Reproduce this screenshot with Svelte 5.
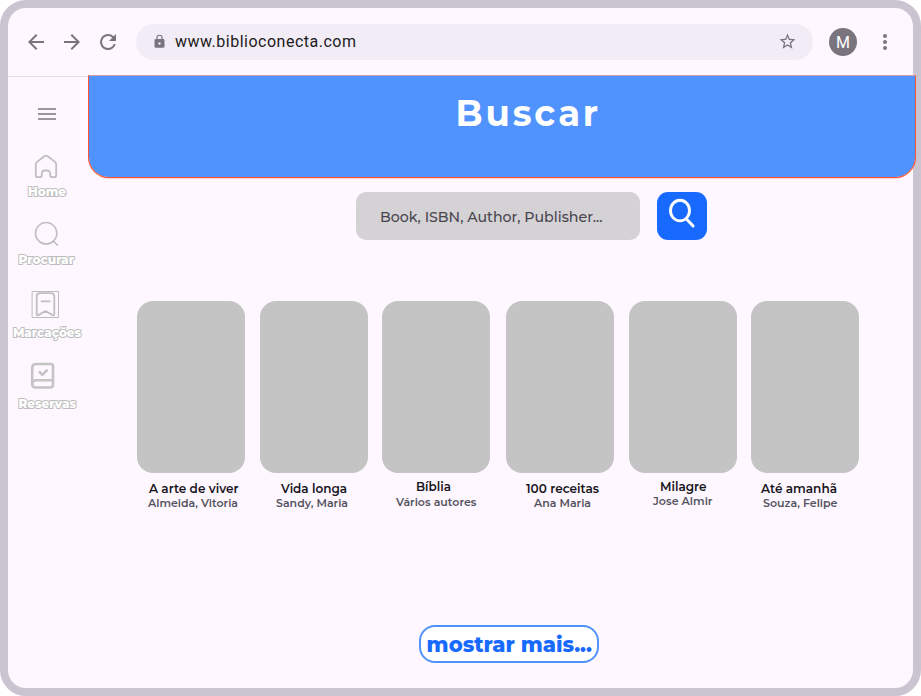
<script>
  const books = [
    { title: 'A arte de viver', author: 'Almeida, Vitoria', t: [12, 89.5, 20], a: [11, 90, 34] },
    { title: 'Vida longa', author: 'Sandy, Maria', t: [21, 66, 20], a: [16, 72, 34] },
    { title: 'Bíblia', author: 'Vários autores', t: [34, 35, 18], a: [14, 80.5, 33] },
    { title: '100 receitas', author: 'Ana Maria', t: [20, 73, 20], a: [28, 57, 34] },
    { title: 'Milagre', author: 'Jose Almir', t: [31, 46.5, 18], a: [24, 59.5, 32] },
    { title: 'Até amanhã', author: 'Souza, Felipe', t: [10, 76, 20], a: [12, 74.5, 34] }
  ];
  const links = [
    { name: 'home', label: 'Home', x: 20, w: 38 },
    { name: 'search', label: 'Procurar', x: 10.5, w: 55.5 },
    { name: 'mark', label: 'Marcações', x: 5, w: 68 },
    { name: 'book', label: 'Reservas', x: 10.5, w: 57.5 }
  ];
</script>

{#snippet fitted(text, x, y, w, cls)}
  <text {x} {y} class={cls} textLength={w} lengthAdjust="spacingAndGlyphs">{text}</text>
{/snippet}

<div class="window">
  <header class="toolbar">
    <svg class="nav-icon" viewBox="0 0 24 24"><path d="M20 11H7.83l5.59-5.59L12 4l-8 8 8 8 1.41-1.41L7.83 13H20z" /></svg>
    <svg class="nav-icon" viewBox="0 0 24 24"><path d="M12 4l-1.41 1.41L16.17 11H4v2h12.17l-5.58 5.59L12 20l8-8z" /></svg>
    <svg class="nav-icon" viewBox="0 0 24 24"><path d="M17.65 6.35A7.96 7.96 0 0 0 12 4a8 8 0 1 0 7.73 10h-2.08A6 6 0 1 1 12 6c1.66 0 3.14.69 4.22 1.78L13 11h7V4z" /></svg>
    <div class="address">
      <svg class="lock" viewBox="0 0 24 24"><path d="M18 8h-1V6A5 5 0 0 0 7 6v2H6a2 2 0 0 0-2 2v10a2 2 0 0 0 2 2h12a2 2 0 0 0 2-2V10a2 2 0 0 0-2-2zm-6 9a2 2 0 1 1 0-4 2 2 0 0 1 0 4zM8.9 8V6a3.1 3.1 0 0 1 6.2 0v2z" /></svg>
      <span class="url">www.biblioconecta.com</span>
      <svg class="star" viewBox="0 0 24 24"><path d="M22 9.24l-7.19-.62L12 2 9.19 8.63 2 9.24l5.46 4.73L5.82 21 12 17.27 18.18 21l-1.63-7.03zM12 15.4l-3.76 2.27 1-4.28-3.32-2.88 4.38-.38L12 6.1l1.71 4.04 4.38.38-3.32 2.88 1 4.28z" /></svg>
    </div>
    <div class="avatar">M</div>
    <svg class="dots" viewBox="0 0 24 24"><circle cx="12" cy="6" r="2" /><circle cx="12" cy="12" r="2" /><circle cx="12" cy="18" r="2" /></svg>
  </header>

  <div class="body">
    <nav class="sidebar">
      <svg class="burger" width="18" height="12"><path d="M0 1h18M0 6h18M0 11h18" stroke="#9c979c" stroke-width="2" /></svg>
      {#each links as link}
        <a class="link {link.name}" href="#{link.name}">
          <svg class="glyph" width="80" height="30" fill="none" stroke="#bfbfbf" stroke-width="1.8" stroke-linecap="round" stroke-linejoin="round">
            {#if link.name === 'home'}
              <path d="M29.8 25.2a2 2 0 0 1-2-2V12.5q0-1.6 1.2-2.6l7.4-5.7q1.6-1.2 3.2 0L47 9.9q1.2 1 1.2 2.600v10.700a2 2 0 0 1-2 2h-2a2 2 0 0 1-2-2v-1.700a3 3 0 0 0-3-3h-2.400a3 3 0 0 0-3 3v1.700a2 2 0 0 1-2 2z" />
            {:else if link.name === 'search'}
              <circle cx="38.2" cy="13.3" r="10.7" stroke-width="1.500" /><path d="M45.300 21l4 4" stroke-width="1.700" />
            {:else if link.name === 'mark'}
              <rect x="24.5" y="1.5" width="26" height="26" stroke="#bcbcbc" stroke-width="1" />
              <path d="M28.700 24V6.500q0-3.400 3.400-3.400h10.800q3.400 0 3.400 3.400V24q0 2-1.700 1.100l-7.100-4.100-7.100 4.100q-1.700.900-1.700-1.100zM33.500 11.300h8.300" />
            {:else}
              <g stroke="#c4c4c4" stroke-width="2.600">
                <path d="M24.200 23V7q0-4 4-4h14.600q2.200 0 2.200 2.200v18.600q0 2.700-2.700 2.700H27.700q-3.500 0-3.500-3.500 0-3.800 3.500-3.800H45M31.800 11.200l2.500 2.700 4.400-4.400" />
              </g>
            {/if}
          </svg>
          <svg class="caption" width="80" height="18">{@render fitted(link.label, link.x, 12, link.w, 'outline')}</svg>
        </a>
      {/each}
    </nav>

    <main>
      <section class="hero">
        <svg width="826" height="101">{@render fitted('Buscar', 366.500, 50, 145.500, 'heading')}</svg>
      </section>

      <div class="search">
        <div class="field"><svg width="284" height="48">{@render fitted('Book, ISBN, Author, Publisher...', 24, 30, 222.5, 'hint')}</svg></div>
        <button class="go" aria-label="Buscar">
          <svg width="50" height="48" fill="none" stroke="#fff" stroke-linecap="round">
            <ellipse cx="23" cy="18.600" rx="9.500" ry="10.300" stroke-width="2.900" /><path d="M29.700 27.200l6.400 6.800" stroke-width="3" />
          </svg>
        </button>
      </div>

      <div class="shelf">
        {#each books as b}
          <article>
            <div class="cover"></div>
            <svg width="108" height="42">
              {@render fitted(b.title, b.t[0], b.t[2], b.t[1], 'title')}
              {@render fitted(b.author, b.a[0], b.a[2], b.a[1], 'author')}
            </svg>
          </article>
        {/each}
      </div>

      <button class="more"><svg width="176" height="34">{@render fitted('mostrar mais...', 5.500, 25, 165.500, 'more-text')}</svg></button>
    </main>
  </div>
</div>

<style>
  :global(body) { background: #fff; }
  * { box-sizing: border-box; }
  svg { display: block; flex: none; overflow: visible; }
  .window {
    width: 921px; height: 696px; border: 8px solid #cac4d0; border-radius: 26px;
    background: #fef7ff; font-family: Montserrat, Inter, sans-serif;
  }
  .toolbar { height: 69px; display: flex; align-items: center; padding: 0 16px 1px; border-bottom: 1px solid #e4dfe6; }
  .nav-icon { width: 24px; height: 24px; margin-right: 12px; fill: #79747e; }
  .address {
    display: flex; align-items: center; width: 677px; height: 36px; margin-left: 4px;
    padding: 0 16px; border-radius: 18px; background: #f2ecf6;
  }
  .lock { width: 15px; height: 15px; fill: #79747e; }
  .url { flex: 1; margin-left: 8px; font: 400 16px/24px Roboto, sans-serif; letter-spacing: .5px; color: #1d1b20; }
  .star { width: 19px; height: 19px; margin-right: .5px; fill: #79747e; }
  .avatar {
    width: 28px; height: 28px; margin-left: 16px; border-radius: 50%; background: #79747e;
    color: #fff; font: 400 16px/29px Roboto, sans-serif; text-align: center;
  }
  .dots { width: 24px; height: 24px; margin-left: 16px; fill: #79747e; }
  .body { display: flex; margin-top: -2px; }
  .sidebar { width: 80px; flex: none; padding-top: 33px; }
  .burger { margin-left: 30px; }
  .link { display: block; text-decoration: none; }
  .home { margin-top: 32px; }
  .search.link { margin-top: 18px; }
  .mark { margin-top: 20px; }
  .book { margin-top: 18px; }
  .home .caption { margin-top: 2px; }
  .search.link .caption { margin-top: 2px; }
  .mark .caption { margin-top: 5px; }
  .book .caption { margin-top: 5px; }
  main { width: 828px; flex: none; display: flex; flex-direction: column; }
  .hero {
    height: 103px; border: 1px solid #fa5535; border-top-color: #d89ba9; border-radius: 0 0 21px 21px;
    background: #5093ff; background-clip: padding-box; box-shadow: 0 .5px 0 rgba(250, 85, 53, .5);
  }
  .search:not(.link) { display: flex; gap: 17px; margin: 14px 0 0 268px; }
  .field { width: 284px; height: 48px; border-radius: 10px; background: #d4d2d5; }
  button { padding: 0; border: 0; display: block; font-family: inherit; }
  .go { width: 50px; height: 48px; border-radius: 11px; background: #186aff; }
  .shelf { display: flex; gap: 14.5px; margin: 61px 0 0 49px; }
  article { width: 108px; flex: none; }
  article:nth-child(4) { margin-left: 1.5px; }
  .cover { height: 172px; border-radius: 16px; background: #c4c4c4; }
  .more { width: 180px; height: 38px; margin: 110px 0 0 331px; border: 2px solid #5093f8; border-radius: 16px; background: #fff; }
  .heading { font-size: 36px; font-weight: 700; fill: #fff; letter-spacing: 2.9px; }
  .hint { font-size: 14px; font-weight: 500; fill: #49454f; }
  .title { font-size: 12px; font-weight: 600; fill: #17151b; }
  .author { font-size: 11px; font-weight: 600; fill: #555461; }
  .more-text { font-size: 22px; font-weight: 800; fill: #186aff; }
  .outline { font-size: 12px; font-weight: 800; fill: #fff; stroke: #bdbdbd; stroke-width: 2px; paint-order: stroke; }
</style>
